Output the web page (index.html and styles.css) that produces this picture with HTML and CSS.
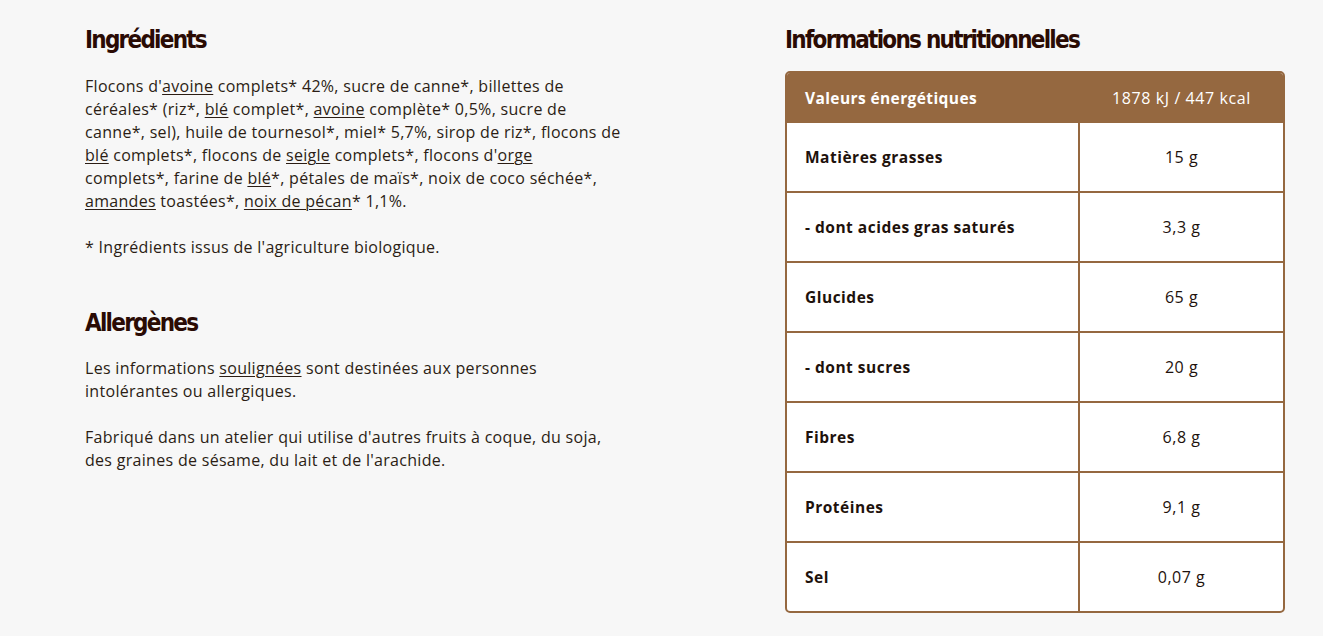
FILE: index.html
```html
<!DOCTYPE html>
<html lang="fr">
<head>
<meta charset="utf-8">
<link rel="stylesheet" href="styles.css">
</head>
<body>
<main class="page">
  <section class="col-left">
    <h2 class="title">Ingrédients</h2>
    <p class="text text-first">Flocons d'<u>avoine</u> complets* 42%, sucre de canne*, billettes de céréales* (riz*, <u>blé</u> complet*, <u>avoine</u> complète* 0,5%, sucre de canne*, sel), huile de tournesol*, miel* 5,7%, sirop de riz*, flocons de <u>blé</u> complets*, flocons de <u>seigle</u> complets*, flocons d'<u>orge</u><br>complets*, farine de <u>blé</u>*, pétales de maïs*, noix de coco séchée*, <u>amandes</u> toastées*, <u>noix de pécan</u>* 1,1%.</p>
    <p class="text">* Ingrédients issus de l'agriculture biologique.</p>
    <h2 class="title title-second">Allergènes</h2>
    <p class="text">Les informations <u>soulignées</u> sont destinées aux personnes intolérantes ou allergiques.</p>
    <p class="text">Fabriqué dans un atelier qui utilise d'autres fruits à coque, du soja, des graines de sésame, du lait et de l'arachide.</p>
  </section>
  <section class="col-right">
    <h2 class="title title-table">Informations nutritionnelles</h2>
    <table class="nutri">
      <thead>
        <tr><th class="lbl">Valeurs énergétiques</th><th class="val">1878 kJ / 447 kcal</th></tr>
      </thead>
      <tbody>
        <tr><td class="lbl">Matières grasses</td><td class="val">15 g</td></tr>
        <tr><td class="lbl">- dont acides gras saturés</td><td class="val">3,3 g</td></tr>
        <tr><td class="lbl">Glucides</td><td class="val">65 g</td></tr>
        <tr><td class="lbl">- dont sucres</td><td class="val">20 g</td></tr>
        <tr><td class="lbl">Fibres</td><td class="val">6,8 g</td></tr>
        <tr><td class="lbl">Protéines</td><td class="val">9,1 g</td></tr>
        <tr><td class="lbl">Sel</td><td class="val">0,07 g</td></tr>
      </tbody>
    </table>
  </section>
</main>
</body>
</html>
```

FILE: styles.css
```css
html, body {
  margin: 0;
  padding: 0;
  background: #f7f7f7;
}
body {
  font-family: "Open Sans", "Noto Sans", sans-serif;
  color: #2b1d14;
}
.page {
  display: grid;
  grid-template-columns: 600px 500px;
  column-gap: 100px;
  padding: 22px 0 0 85px;
}
.title {
  margin: 0 0 17px 0;
  font-family: "DejaVu Sans Condensed", "DejaVu Sans", sans-serif;
  font-stretch: condensed;
  font-weight: 700;
  font-size: 24px;
  line-height: 36px;
  color: #2a0b04;
  letter-spacing: -1.75px;
}
.title-table {
  margin-bottom: 13px;
}
.title-second {
  margin-top: 46px;
  margin-bottom: 16px;
}
.text {
  margin: 0 0 23px 0;
  width: 536px;
  font-size: 16px;
  letter-spacing: 0.3px;
  line-height: 23px;
  color: #2b1d14;
}
.text u {
  text-underline-offset: 2px;
  text-decoration-thickness: 1px;
}
.nutri {
  width: 500px;
  border-collapse: separate;
  border-spacing: 0;
  border: 2px solid #956840;
  border-radius: 5px;
  overflow: hidden;
  background: #ffffff;
}
.nutri thead th {
  background: #956840;
  color: #ffffff;
  height: 50px;
  padding: 0;
  font-size: 15.5px;
  letter-spacing: 0.4px;
}
.nutri thead th.lbl {
  font-weight: 700;
  text-align: left;
  padding-left: 18px;
}
.nutri thead th.val {
  font-weight: 400;
  font-size: 16px;
  letter-spacing: 0.6px;
  text-align: center;
}
.nutri td {
  height: 68px;
  padding: 0;
  font-size: 15.5px;
  letter-spacing: 0.5px;
  color: #1e120c;
  border-top: 2px solid #956840;
}
.nutri tbody tr:first-child td {
  border-top: none;
}
.nutri td.lbl {
  font-weight: 700;
  padding-left: 18px;
  width: 273px;
  border-right: 2px solid #956840;
}
.nutri td.val {
  text-align: center;
  font-weight: 400;
  font-size: 16px;
  letter-spacing: 0.5px;
}
```
